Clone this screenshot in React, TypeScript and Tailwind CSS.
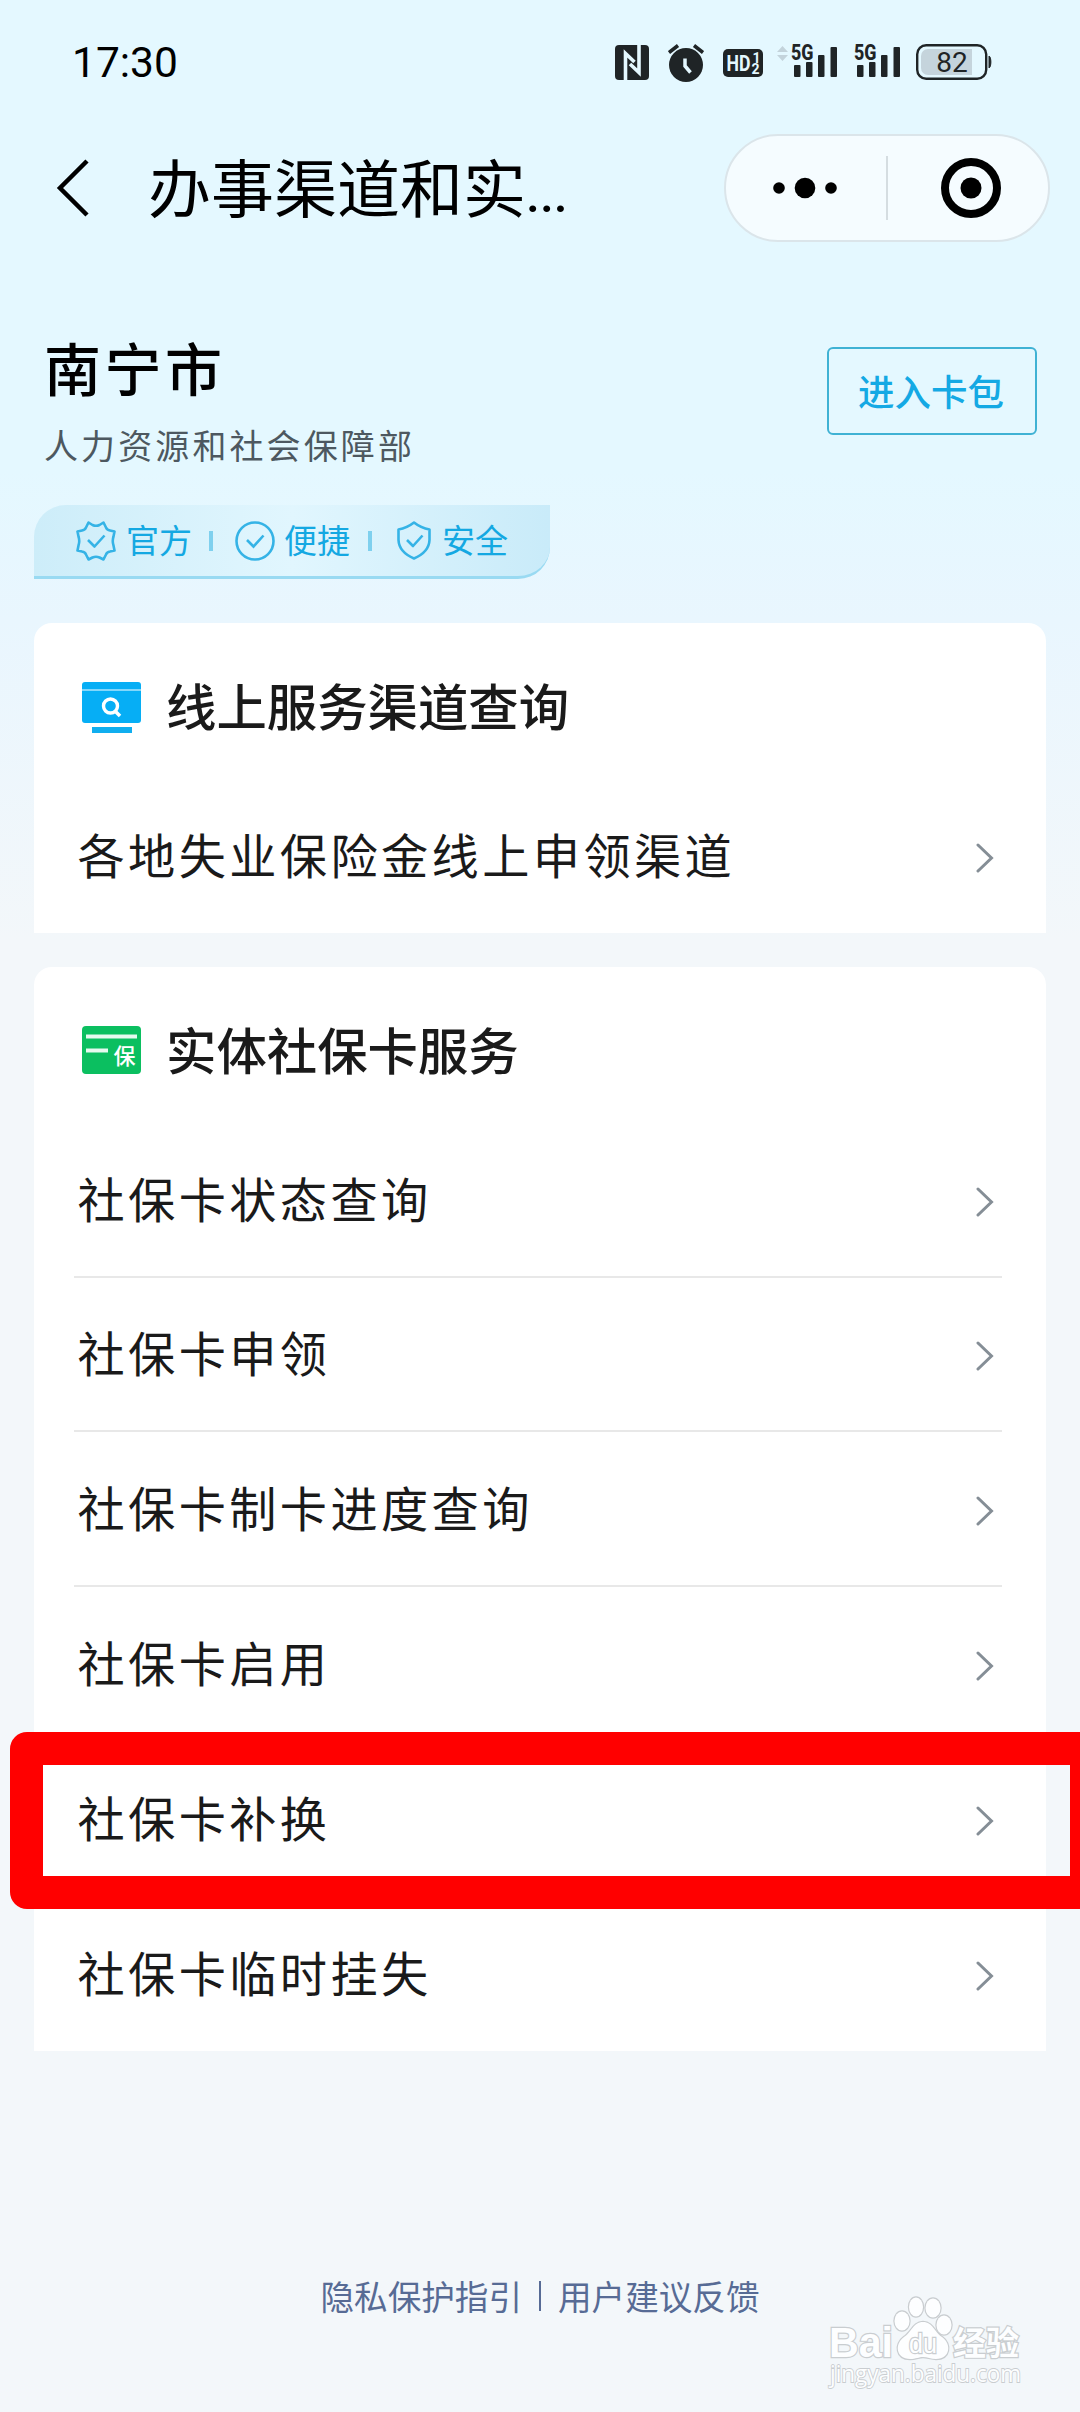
import type { ReactNode } from "react"

interface SectionProps {
  icon: ReactNode
  title: string
  items: string[]
  highlighted?: string
}

const onlineServices = ["各地失业保险金线上申领渠道"]

const cardServices = [
  "社保卡状态查询",
  "社保卡申领",
  "社保卡制卡进度查询",
  "社保卡启用",
  "社保卡补换",
  "社保卡临时挂失",
]

function NfcIcon() {
  return (
    <svg width="34" height="35" viewBox="0 0 34 35">
      <rect width="34" height="35" rx="4" fill="#1f2426" />
      <path
        d="M10.500 35V8.500L19.500 17M24 0V27.500L15 19"
        fill="none"
        stroke="#e4f8ff"
        strokeWidth="3.600"
      />
    </svg>
  )
}

function AlarmIcon() {
  return (
    <svg width="36" height="38" viewBox="0 0 36 38">
      <circle cx="18" cy="21" r="17" fill="#1f2426" />
      <path d="M1 8.500L10 1.500M35 8.500L26 1.500" stroke="#1f2426" strokeWidth="3.500" />
      <path d="M17 14.500V22L22.500 28.500" fill="none" stroke="#e4f8ff" strokeWidth="3.500" />
    </svg>
  )
}

function HdIcon() {
  return (
    <svg width="40" height="28" viewBox="0 0 40 28" fontFamily="Roboto, sans-serif" fontWeight="700" fill="#e4f8ff">
      <rect width="40" height="28" rx="5" fill="#1f2426" />
      <text x="3.500" y="22" fontSize="22" textLength="24" lengthAdjust="spacingAndGlyphs">HD</text>
      <text x="29.500" y="13.500" fontSize="14">1</text>
      <text x="28.500" y="25" fontSize="14">2</text>
    </svg>
  )
}

function SignalIcon() {
  return (
    <svg className="overflow-visible" width="46" height="34" viewBox="0 0 46 34" fill="#1f2426">
      <text
        x="0"
        y="16"
        fontSize="21.500"
        fontWeight="800"
        fontFamily="Roboto, sans-serif"
        textLength="22.500"
        lengthAdjust="spacingAndGlyphs"
      >
        5G
      </text>
      <rect x="3" y="21" width="6.500" height="12" rx="1" />
      <rect x="15" y="18" width="6.500" height="15" rx="1" />
      <rect x="27" y="11" width="6.500" height="22" rx="1" />
      <rect x="39.500" y="3" width="6.500" height="30" rx="1" />
    </svg>
  )
}

function BatteryIcon() {
  return (
    <svg width="76" height="36" viewBox="0 0 76 36">
      <rect x="1.200" y="1.200" width="69" height="33.600" rx="9" fill="none" stroke="#1f2426" strokeWidth="2.400" />
      <path d="M12 5H56V31H12A7 7 0 0 1 5 24V12A7 7 0 0 1 12 5Z" fill="#c5d4dc" />
      <path d="M73 12C75.500 13 75.500 23 73 24Z" fill="#1f2426" stroke="#1f2426" />
      <text x="36" y="27.500" fontSize="28" textAnchor="middle" fontFamily="Roboto, sans-serif" fill="#1f2426">
        82
      </text>
    </svg>
  )
}

function StatusBar() {
  return (
    <div className="flex h-[124px] items-start justify-between pt-11 pl-[72px] pr-[88px]">
      <span className="-mt-[3px] font-[Roboto] text-[42.500px] leading-[44px] text-black">17:30</span>
      <div className="flex items-start">
        <div className="pt-px"><NfcIcon /></div>
        <div className="ml-[19px]"><AlarmIcon /></div>
        <div className="ml-[19px] pt-[5px]"><HdIcon /></div>
        <svg className="ml-[14px] mt-0.5" width="11" height="15" viewBox="0 0 11 15" fill="#c3d3db">
          <path d="M0 6L5.500 0L11 6ZM0 9H11L5.500 15Z" />
        </svg>
        <div className="ml-[3px]"><SignalIcon /></div>
        <div className="ml-[17px]"><SignalIcon /></div>
        <div className="ml-4"><BatteryIcon /></div>
      </div>
    </div>
  )
}

function NavBar() {
  return (
    <header className="flex h-32 items-center justify-between pl-14 pr-[30px]">
      <div className="flex items-center">
        <svg width="34" height="58" viewBox="0 0 34 58" fill="none" stroke="#000" strokeWidth="4.500">
          <path d="M31 2L4 29L31 56" />
        </svg>
        <h1 className="mt-[3px] ml-[58px] text-[63px] leading-[80px] text-black">
          办事渠道和实<span className="font-[Roboto] text-[50px] font-medium">...</span>
        </h1>
      </div>
      <div className="flex h-[108px] w-[326px] items-center rounded-full border-2 border-[#dbe5ea] bg-[#f5fcff]">
        <svg className="ml-[47px]" width="64" height="22" viewBox="0 0 64 22">
          <circle cx="6" cy="11" r="5.800" />
          <circle cx="32" cy="11" r="10.300" />
          <circle cx="58" cy="11" r="5.800" />
        </svg>
        <div className="ml-[49px] h-16 w-0.5 bg-[#d5dde1]" />
        <svg className="ml-[53px]" width="60" height="60" viewBox="0 0 60 60">
          <circle cx="30" cy="30" r="26" fill="none" stroke="#000" strokeWidth="8" />
          <circle cx="30" cy="30" r="10.500" />
        </svg>
      </div>
    </header>
  )
}

function Badges() {
  return (
    <div className="flex h-[74px] w-[516px] items-center rounded-tl-[32px] rounded-br-[32px] border-b-[3px] border-[#99daf2] bg-linear-to-r from-[#cdedf9] via-[#e1f6fe] to-[#c9ebf9] pl-[42px] text-[33px] leading-[44px] text-[#14a8e2]">
      <svg width="40" height="40" viewBox="0 0 40 40" fill="none" stroke="#35b3e6" strokeWidth="2.600" strokeLinejoin="round">
        <path d="M12.500 1.500L16.500 4Q20 5.500 23.500 4L27.500 1.500L30 6.500Q31 9 34 9.500L38.500 10.500L37.500 15.500Q36 20 37.500 24.500L38.500 29.500L34 30.500Q31 31 30 33.500L27.500 38.500L23.500 36.500Q20 35 16.500 36.500L12.500 38.500L10 33.500Q9 31 6 30.500L1.500 29.500L2.500 24.500Q4 20 2.500 15.500L1.500 10.500L6 9.500Q9 9 10 6.500Z" />
        <path d="M12 19L18.500 25.500L28.500 14.500" />
      </svg>
      <span className="-mt-1 ml-[10px]">官方</span>
      <i className="ml-[17px] h-5 w-1 bg-[#7fd0ee]" />
      <svg className="ml-[22px]" width="40" height="40" viewBox="0 0 40 40" fill="none" stroke="#35b3e6" strokeWidth="2.600">
        <circle cx="20" cy="20" r="18.500" />
        <path d="M12 19L18.500 25.500L28.500 14.500" />
      </svg>
      <span className="-mt-1 ml-[9px]">便捷</span>
      <i className="ml-[18px] h-5 w-1 bg-[#7fd0ee]" />
      <svg className="ml-[25px]" width="34" height="40" viewBox="0 0 34 40" fill="none" stroke="#35b3e6" strokeWidth="2.600" strokeLinejoin="round">
        <path d="M17 1.500Q24 7 32.500 8.500V19Q32 31 17 37.500Q2 31 1.500 19V8.500Q10 7 17 1.500Z" />
        <path d="M10 19L16 25L25.500 14.500" />
      </svg>
      <span className="-mt-1 ml-[11px]">安全</span>
    </div>
  )
}

function MonitorIcon() {
  return (
    <svg width="59" height="52" viewBox="0 0 59 52">
      <rect width="59" height="41" rx="3" fill="#06aef5" />
      <path d="M0 8H59" stroke="#fff" strokeWidth="1" />
      <circle cx="28.500" cy="24" r="7" fill="none" stroke="#fff" strokeWidth="3.400" />
      <path d="M33 29L38 34" stroke="#fff" strokeWidth="3.600" />
      <rect x="10" y="45" width="40" height="6" fill="#10aeef" />
    </svg>
  )
}

function CardIcon() {
  return (
    <svg width="59" height="52" viewBox="0 0 59 52">
      <rect width="59" height="48" rx="4" fill="#0bbf60" />
      <path d="M4 10.500H55M4 24.500H26" stroke="#e6faef" strokeWidth="4.200" />
      <text x="31.500" y="38" fontSize="22" fontWeight="500" fill="#fff">保</text>
    </svg>
  )
}

function Section({ icon, title, items, highlighted }: SectionProps) {
  return (
    <section className="rounded-t-[18px] bg-white px-10">
      <div className="flex h-[156px] items-start pt-[59px] pl-2">
        {icon}
        <h2 className="-mt-[11px] ml-[25px] text-[50.400px] leading-[68px] font-medium text-[#1a1a1a]">
          {title}
        </h2>
      </div>
      <ul>
        {items.map((item) => (
          <li
            key={item}
            className="relative mr-1 flex h-[154.800px] items-center justify-between border-b-2 border-[#e8e8e8] pr-2 pl-[3.500px] last:h-[153.800px] last:border-b-0"
          >
            <span className="-mt-[3px] text-[47.200px] leading-[64px] tracking-[3.400px] text-[#1a1a1a]">
              {item}
            </span>
            <svg className="mt-[5px]" width="18" height="30" viewBox="0 0 18 30" fill="none" stroke="#858e96" strokeWidth="3" strokeLinecap="round">
              <path d="M2 2L15.500 15L2 28" />
            </svg>
            {item === highlighted && (
              <div className="absolute -top-[10px] -left-[64px] h-[177px] w-[1093px] rounded-[17px] border-[33px] border-[#ff0000]" />
            )}
          </li>
        ))}
      </ul>
    </section>
  )
}

function Watermark() {
  return (
    <svg
      className="absolute right-[54px] bottom-[5px] overflow-visible"
      width="200"
      height="116"
      viewBox="0 0 200 116"
      fill="#fdfeff"
      stroke="#c9cdd0"
      strokeWidth="2.400"
      paintOrder="stroke"
    >
      <text x="3" y="66" fontSize="43" fontWeight="700" fontFamily="'Liberation Sans', sans-serif" textLength="64" lengthAdjust="spacingAndGlyphs">
        Bai
      </text>
      <path d="M97 31C87 31 86 41 78 46C68 53 70 68 84 68C90 68 93 66 97 66C101 66 105 68 110 68C124 68 126 53 116 46C108 41 107 31 97 31Z" />
      <ellipse cx="76" cy="30" rx="7.500" ry="9.500" />
      <ellipse cx="90" cy="16" rx="7" ry="9.500" />
      <ellipse cx="107" cy="17" rx="7.500" ry="9.500" />
      <ellipse cx="118" cy="34" rx="7.500" ry="9.500" />
      <text x="83" y="62" fontSize="27" fontWeight="400" fontFamily="'Liberation Sans', sans-serif" textLength="28" lengthAdjust="spacingAndGlyphs">
        du
      </text>
      <text x="127" y="64" fontSize="33" fontWeight="700">经验</text>
      <text x="4" y="91" fontSize="24" strokeWidth="1.800" fontFamily="'Open Sans', sans-serif" textLength="191" lengthAdjust="spacingAndGlyphs">
        jingyan.baidu.com
      </text>
    </svg>
  )
}

export default function App() {
  return (
    <div className="relative flex h-[2412px] w-[1080px] flex-col overflow-hidden bg-[#f3f7fa] bg-[linear-gradient(180deg,#e4f8ff_0px,#e4f8ff_470px,#e9f6fe_620px,#f3f7fa_940px)] font-['Noto_Sans_CJK_SC',sans-serif]">
      <StatusBar />
      <NavBar />
      <div className="flex h-[253px] items-start justify-between pt-[79px] pr-[43px] pl-11">
        <div>
          <h2 className="text-[57px] leading-[70px] font-medium tracking-[3.500px] text-black">南宁市</h2>
          <p className="mt-5 text-[34px] leading-[48px] tracking-[3.100px] text-[#4d5860]">
            人力资源和社会保障部
          </p>
        </div>
        <button
          type="button"
          className="mt-4 h-[88px] w-[210px] rounded-md border-2 border-[#3fb2d4] pr-0.5 text-[36.500px] leading-[50px] font-medium text-[#14a9e4]"
        >
          进入卡包
        </button>
      </div>
      <main className="flex flex-col gap-[34px] px-[34px]">
        <div className="mb-[10px]">
          <Badges />
        </div>
        <Section icon={<MonitorIcon />} title="线上服务渠道查询" items={onlineServices} />
        <Section
          icon={<CardIcon />}
          title="实体社保卡服务"
          items={cardServices}
          highlighted="社保卡补换"
        />
      </main>
      <footer className="mt-[221px] flex items-center justify-center text-[33.600px] leading-[48px] text-[#576b95]">
        <span>隐私保护指引</span>
        <i className="mr-[17px] ml-[17px] h-[30px] w-0.5 bg-[#576b95]" />
        <span>用户建议反馈</span>
      </footer>
      <Watermark />
    </div>
  )
}
